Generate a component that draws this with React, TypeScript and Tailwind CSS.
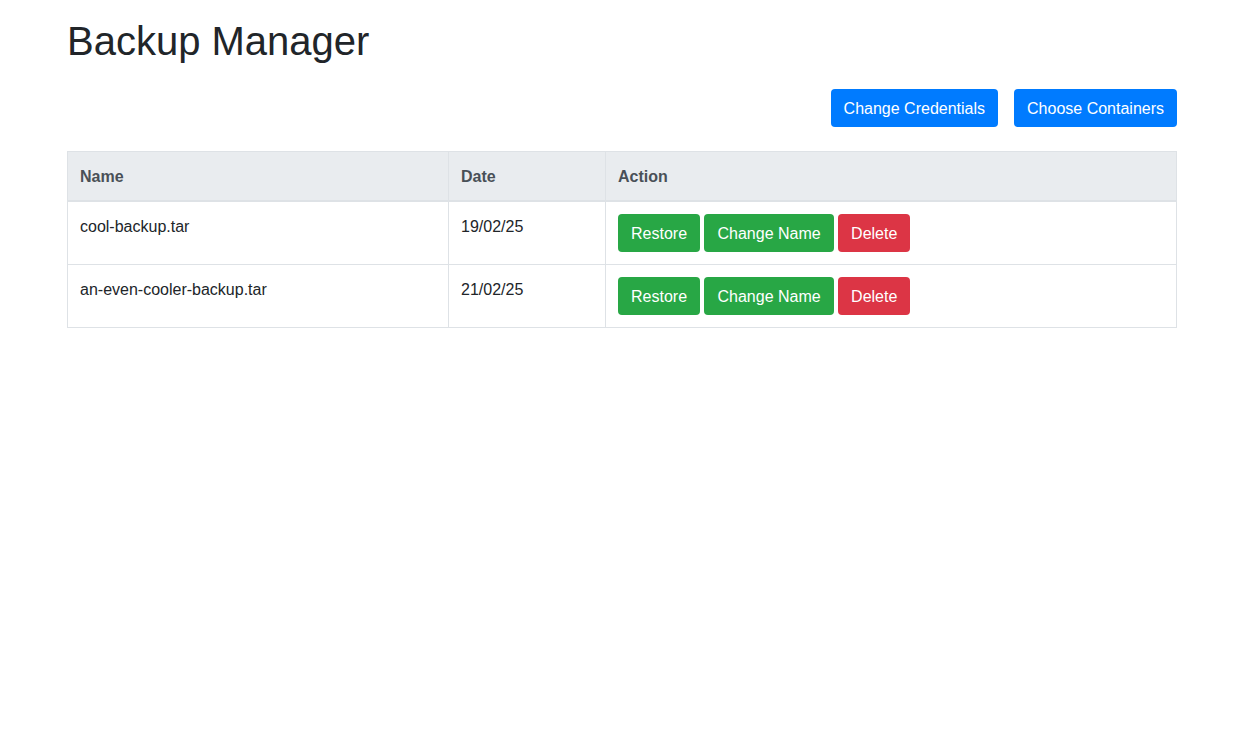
const backups = [
  { name: "cool-backup.tar", date: "19/02/25" },
  { name: "an-even-cooler-backup.tar", date: "21/02/25" },
];

const btn =
  "inline-block align-middle rounded-[4px] border border-transparent px-[12px] pt-[7px] pb-[5px] text-[16px] leading-[24px] text-white";

const th = "border border-b-2 border-[#dee2e6] px-[12px] pt-[13px] pb-[11px] text-left align-bottom font-bold";
const td = "border border-[#dee2e6] px-[12px] pt-[13px] pb-[11px] align-top";

export default function App() {
  return (
    <div
      className="min-h-screen bg-white text-[#212529]"
      style={{ fontFamily: '"Liberation Sans", Arial, sans-serif' }}
    >
      <div className="ml-[67px] w-[1110px] pt-[17px]">
        <h1 className="text-[40px] leading-[48px] font-normal">Backup Manager</h1>

        <div className="mt-[24px] mb-[24px] flex justify-end gap-[16px]">
          <button className={`${btn} bg-[#007bff]`}>Change Credentials</button>
          <button className={`${btn} bg-[#007bff]`}>Choose Containers</button>
        </div>

        <table className="w-full border-collapse border border-[#dee2e6] text-[16px] leading-[24px]">
          <thead>
            <tr className="bg-[#e9ecef] text-[#495057]">
              <th className={`${th} w-[381px]`}>Name</th>
              <th className={`${th} w-[157px]`}>Date</th>
              <th className={th}>Action</th>
            </tr>
          </thead>
          <tbody>
            {backups.map((b) => (
              <tr key={b.name}>
                <td className={td}>{b.name}</td>
                <td className={td}>{b.date}</td>
                <td className="border border-[#dee2e6] p-[12px] align-top">
                  <button className={`${btn} bg-[#28a745]`}>Restore</button>{" "}
                  <button className={`${btn} bg-[#28a745]`}>Change Name</button>{" "}
                  <button className={`${btn} bg-[#dc3545]`}>Delete</button>
                </td>
              </tr>
            ))}
          </tbody>
        </table>
      </div>
    </div>
  );
}
